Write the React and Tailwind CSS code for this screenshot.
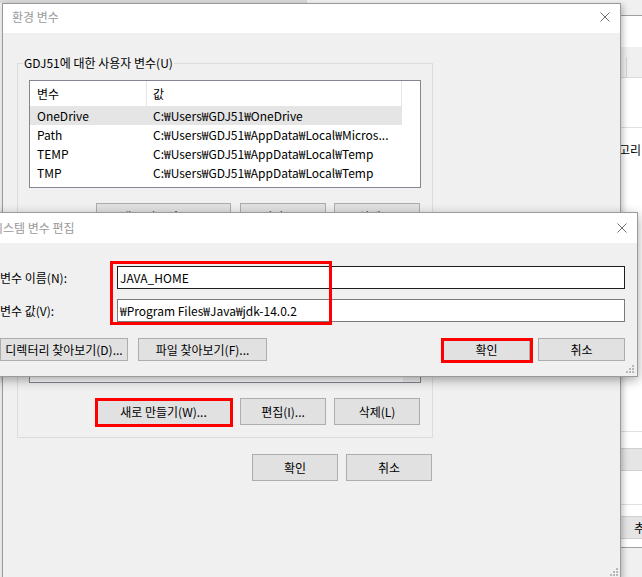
const font = "font-['Noto_Sans_CJK_KR','Noto_Sans',sans-serif]";

const userVars = [
  ["OneDrive", "C:₩Users₩GDJ51₩OneDrive"],
  ["Path", "C:₩Users₩GDJ51₩AppData₩Local₩Micros..."],
  ["TEMP", "C:₩Users₩GDJ51₩AppData₩Local₩Temp"],
  ["TMP", "C:₩Users₩GDJ51₩AppData₩Local₩Temp"],
];

function CloseX() {
  return (
    <svg width="10" height="10" viewBox="0 0 10 10">
      <path d="M0.5 0.5L9.5 9.5M9.5 0.5L0.5 9.5" stroke="#6f6f6f" strokeWidth="1" fill="none" />
    </svg>
  );
}

function Grip() {
  const dots = [[6, 0], [3, 3], [6, 3], [0, 6], [3, 6], [6, 6]];
  return (
    <svg width="8" height="8" viewBox="0 0 8 8">
      {dots.map(([x, y]) => (
        <rect key={`${x}-${y}`} x={x} y={y} width="2" height="2" fill="#b8b8b8" />
      ))}
    </svg>
  );
}

function Btn({ children, className = "" }) {
  return (
    <button className={`flex items-center justify-center border border-[#adadad] bg-[#e1e1e1] text-[12px] leading-[16px] text-black whitespace-nowrap ${className}`}>
      {children}
    </button>
  );
}

// user list: header + rows; the system list is hidden behind the edit dialog, only its frame shows
function VarList({ rows, selected }) {
  return (
    <div className="flex h-[108px] border border-[#828790] bg-white overflow-hidden">
      <div className="flex w-[372px] flex-col">
        <div className="flex h-[25px] shrink-0">
          <div className="flex w-[117px] items-center border-r border-[#e5e5e5] pl-[7px]">변수</div>
          <div className="flex flex-1 items-center border-r border-[#e5e5e5] pl-[6px]">값</div>
        </div>
        {rows.map(([name, value], i) => (
          <div key={name} className={`flex h-[19px] shrink-0 items-center whitespace-nowrap ${i === selected ? "bg-[#e5e5e5]" : ""}`}>
            <div className="w-[117px] pl-[7px]">{name}</div>
            <div className="pl-[6px]">{value}</div>
          </div>
        ))}
      </div>
    </div>
  );
}

function GroupBox({ label, children, className = "" }) {
  return (
    <div className={`relative w-[416px] border border-[#dcdcdc] px-[11px] pt-[16px] pb-[11px] ${className}`}>
      <span className="absolute left-[5px] top-[-9px] bg-[#f0f0f0] px-[1px] leading-[16px]">{label}</span>
      {children}
    </div>
  );
}

function EnvDialog() {
  return (
    <div className="absolute left-[2px] top-[3px] flex h-[576px] w-[619px] flex-col border border-[#9a9a9a] bg-[#f0f0f0] shadow-[2px_2px_6px_rgba(0,0,0,0.25)]">
      <div className="flex h-[29px] shrink-0 items-center justify-between bg-white pb-[3px] pl-[9px] pr-[10px]">
        <span className="text-[#9a9a9a]">환경 변수</span>
        <CloseX />
      </div>
      <div className="flex flex-col pl-[14px] pt-[30px]">
        <GroupBox label="GDJ51에 대한 사용자 변수(U)">
          <VarList rows={userVars} selected={0} />
          <div className="mt-[15px] flex justify-end gap-[8px] pr-[1px]">
            <Btn className="mr-[1px] h-[27px] w-[135px]">새로 만들기(W)...</Btn>
            <Btn className="h-[27px] w-[86px]">편집(I)...</Btn>
            <Btn className="h-[27px] w-[86px]">삭제(L)</Btn>
          </div>
        </GroupBox>
        <div className="mt-[13px] w-[416px] border border-[#dcdcdc] px-[11px] pt-[16px] pb-[12px]">
          <div className="flex h-[111px] border border-[#828790] bg-white">
            <div className="w-[372px]" />
            <div className="ml-[1px] flex-1 bg-[#f0f0f0]" />
          </div>
          <div className="mt-[15px] flex justify-end gap-[8px] pr-[1px]">
            <Btn className="mr-[1px] h-[27px] w-[135px]">새로 만들기(W)...</Btn>
            <Btn className="h-[27px] w-[86px]">편집(I)...</Btn>
            <Btn className="h-[27px] w-[86px]">삭제(L)</Btn>
          </div>
        </div>
        <div className="mt-[16px] flex w-[416px] justify-end gap-[8px] pr-[1px]">
          <Btn className="h-[27px] w-[86px]">확인</Btn>
          <Btn className="h-[27px] w-[86px]">취소</Btn>
        </div>
      </div>
      <div className="absolute bottom-[2px] right-[2px]">
        <Grip />
      </div>
    </div>
  );
}

function EditDialog() {
  return (
    <div className="absolute left-[-13px] top-[212px] flex h-[165px] w-[651px] flex-col border border-[#9a9a9a] bg-[#f0f0f0] shadow-[0_3px_10px_rgba(0,0,0,0.35)]">
      <div className="flex h-[30px] shrink-0 items-center justify-between bg-white pl-[4px] pr-[10px]">
        <span className="text-[#9a9a9a]">시스템 변수 편집</span>
        <CloseX />
      </div>
      <div className="flex flex-col px-[12px] pt-[23px]">
        <div className="flex items-center">
          <span className="w-[117px]">변수 이름(N):</span>
          <div className="flex h-[23px] flex-1 items-center border border-[#1e1e1e] bg-white pl-[2px]">JAVA_HOME</div>
        </div>
        <div className="mt-[10px] flex items-center">
          <span className="w-[117px]">변수 값(V):</span>
          <div className="flex h-[23px] flex-1 items-center border border-[#7a7a7a] bg-white pl-[2px] whitespace-nowrap">₩Program Files₩Java₩jdk-14.0.2</div>
        </div>
        <div className="mt-[16px] flex gap-[10px]">
          <Btn className="h-[23px] w-[128px]">디렉터리 찾아보기(D)...</Btn>
          <Btn className="h-[23px] w-[129px]">파일 찾아보기(F)...</Btn>
          <div className="ml-auto flex gap-[8px]">
            <Btn className="h-[23px] w-[87px]">확인</Btn>
            <Btn className="h-[23px] w-[87px]">취소</Btn>
          </div>
        </div>
      </div>
      <div className="absolute bottom-[3px] right-[3px]">
        <Grip />
      </div>
    </div>
  );
}

function BackWindow() {
  return (
    <div className="absolute left-[560px] top-[15px] flex h-[533px] w-[100px] flex-col border border-[#a0a0a0] bg-white">
      <div className="mt-[31px] flex h-[31px] items-end border-b border-[#dadada] bg-[#f0f0f0]">
        <div className="h-[20px] w-[66px] border-r border-[#d4d4d4]" />
      </div>
      <div className="mt-[49px] border-t border-[#e0e0e0]" />
      <div className="mt-[14px] whitespace-nowrap pl-[36px] leading-[16px]">카테고리</div>
      <div className="mt-[273px] border-t border-[#e0e0e0]" />
      <div className="mt-[16px] h-[23px] border-y border-[#cfcfcf] bg-[#e5e5e5]" />
      <div className="mt-[33px] border-t border-[#e0e0e0]" />
      <div className="mt-[11px] flex h-[23px] items-center border-y border-[#cfcfcf] bg-[#e5e5e5] pl-[73px]">추가</div>
    </div>
  );
}

export default function App() {
  return (
    <div className={`relative h-[577px] w-[642px] overflow-hidden bg-[#f0f0f0] text-[12px] leading-[16px] text-black ${font}`}>
      <div className="absolute left-0 top-0 h-[3px] w-[307px] bg-[#d9d9d9]" />
      <BackWindow />
      <EnvDialog />
      <EditDialog />
      <div className="pointer-events-none absolute left-[110px] top-[261px] h-[64px] w-[222px] border-[3px] border-[#ff0000]" />
      <div className="pointer-events-none absolute left-[441px] top-[338px] h-[25px] w-[92px] border-[3px] border-[#ff0000]" />
      <div className="pointer-events-none absolute left-[95px] top-[398px] h-[29px] w-[138px] border-[3px] border-[#ff0000]" />
    </div>
  );
}
